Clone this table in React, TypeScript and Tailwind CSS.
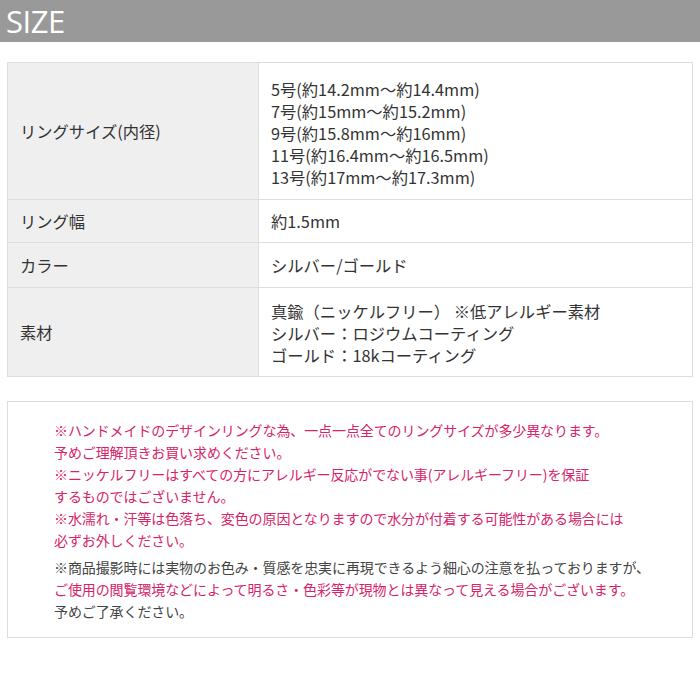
const font = "font-['Noto_Sans_CJK_JP','Noto_Sans',sans-serif]";

const rows: { label: string; lines: string[]; pad: string }[] = [
  {
    label: "リングサイズ(内径)",
    lines: [
      "5号(約14.2mm～約14.4mm)",
      "7号(約15mm～約15.2mm)",
      "9号(約15.8mm～約16mm)",
      "11号(約16.4mm～約16.5mm)",
      "13号(約17mm～約17.3mm)",
    ],
    pad: "pt-[15px] pb-[11px]",
  },
  { label: "リング幅", lines: ["約1.5mm"], pad: "py-[10px]" },
  { label: "カラー", lines: ["シルバー/ゴールド"], pad: "py-[11px]" },
  {
    label: "素材",
    lines: [
      "真鍮（ニッケルフリー） ※低アレルギー素材",
      "シルバー：ロジウムコーティング",
      "ゴールド：18kコーティング",
    ],
    pad: "pt-[12px] pb-[10px]",
  },
];

export default function App() {
  return (
    <div className={`w-[700px] h-[700px] bg-white ${font}`}>
      <div className="h-[42px] bg-[#999999] flex items-center px-[6px]">
        <h2 className="text-white text-[31px] leading-none font-['Open_Sans',sans-serif] tracking-[-0.5px]">SIZE</h2>
      </div>

      <div className="mx-[7px] mt-[20px] border border-[#dddddd]">
        {rows.map((r, i) => (
          <div key={r.label} className={`flex ${i > 0 ? "border-t border-[#dddddd]" : ""}`}>
            <div className="w-[251px] shrink-0 bg-[#efefef] border-r border-[#dddddd] flex items-center pl-[12px] text-[16.3px] text-[#333333]">
              {r.label}
            </div>
            <div className={`flex-1 pl-[12px] ${r.pad} text-[16.3px] leading-[22px] text-[#333333]`}>
              {r.lines.map((l) => (
                <div key={l}>{l}</div>
              ))}
            </div>
          </div>
        ))}
      </div>

      <div className="mx-[7px] mt-[24px] border border-[#dddddd] pl-[46px] pt-[17px] pb-[15px] text-[14px] leading-[22px] tracking-[-0.1px]">
        <div className="text-[#d6246a]">
          <p>※ハンドメイドのデザインリングな為、一点一点全てのリングサイズが多少異なります。</p>
          <p>予めご理解頂きお買い求めください。</p>
          <p>※ニッケルフリーはすべての方にアレルギー反応がでない事(アレルギーフリー)を保証</p>
          <p>するものではございません。</p>
          <p>※水濡れ・汗等は色落ち、変色の原因となりますので水分が付着する可能性がある場合には</p>
          <p>必ずお外しください。</p>
        </div>
        <div className="mt-[5px]">
          <p className="text-[#444444]">※商品撮影時には実物のお色み・質感を忠実に再現できるよう細心の注意を払っておりますが、</p>
          <p className="text-[#d6246a]">ご使用の閲覧環境などによって明るさ・色彩等が現物とは異なって見える場合がございます。</p>
          <p className="text-[#444444]">予めご了承ください。</p>
        </div>
      </div>
    </div>
  );
}
